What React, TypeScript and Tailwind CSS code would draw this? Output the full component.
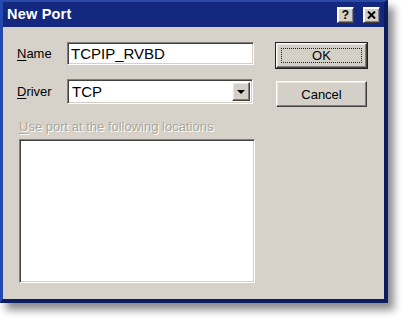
import React from "react";

const raised =
  "bg-[#d4d0c8] border border-t-white border-l-white border-r-[#404040] border-b-[#404040] shadow-[inset_-1px_-1px_0_#808080,inset_1px_1px_0_#e8e6e0]";
const sunken =
  "bg-white border border-t-[#808080] border-l-[#808080] border-r-white border-b-white shadow-[inset_1px_1px_0_#404040,inset_-1px_-1px_0_#d4d0c8]";

export default function App() {
  return (
    <div
      className="w-[404px] h-[320px] bg-white overflow-hidden"
      style={{ fontFamily: '"Liberation Sans", Arial, sans-serif' }}
    >
      <div className="w-[388px] h-[303px] flex flex-col border-t-2 border-t-[#2a4aa8] border-l-[3px] border-l-[#2449b0] border-r-4 border-r-[#0b1d5e] border-b-4 border-b-[#0b1d5e] bg-[#14297f] shadow-[6px_7px_8px_rgba(0,0,0,0.45)]">
        {/* Title bar */}
        <div className="h-[25px] flex items-center pl-[4px] pr-[4px] bg-[#13287e]">
          <span className="text-white font-bold text-[14.5px] leading-none tracking-[0.2px]">New Port</span>
          <div className="ml-auto flex items-center gap-[9px] mt-[1px]">
            <div className={`${raised} w-[17px] h-[16px] flex items-center justify-center border-[#222] shadow-[inset_1px_1px_0_#fff,inset_-1px_-1px_0_#808080]`}>
              <span className="font-bold text-[12px] leading-none text-black">?</span>
            </div>
            <div className={`${raised} w-[17px] h-[16px] flex items-center justify-center border-[#222] shadow-[inset_1px_1px_0_#fff,inset_-1px_-1px_0_#808080]`}>
              <svg width="9" height="8" viewBox="0 0 9 8">
                <path d="M1 0.5 L8 7.5 M8 0.5 L1 7.5" stroke="#000" strokeWidth="2" />
              </svg>
            </div>
          </div>
        </div>
        {/* Body */}
        <div className="flex-1 bg-[#d6d2ca] flex pt-[15px] pl-[14px] pr-[16px] pb-[16px] gap-[20px]">
          <div className="w-[238px] flex flex-col">
            <div className="flex items-center h-[23px]">
              <span className="w-[50px] text-[13px] text-black">
                <span className="underline underline-offset-2">N</span>ame
              </span>
              <div className={`${sunken} w-[187px] h-[23px] flex items-center pl-[3px]`}>
                <span className="text-[15px] text-black leading-none">TCPIP_RVBD</span>
              </div>
            </div>
            <div className="flex items-center h-[25px] mt-[14px]">
              <span className="w-[50px] text-[13px] text-black">
                <span className="underline underline-offset-2">D</span>river
              </span>
              <div className={`${sunken} w-[186px] h-[25px] flex items-center p-[2px]`}>
                <span className="flex-1 pl-[2px] text-[15px] text-black leading-none">TCP</span>
                <div className={`${raised} w-[18px] h-full flex items-center justify-center`}>
                  <svg width="8" height="4" viewBox="0 0 8 4">
                    <path d="M0 0 H8 L4 4 Z" fill="#000" />
                  </svg>
                </div>
              </div>
            </div>
            <div className="mt-[15px] h-[16px] ml-[2px] text-[13px] leading-[16px] text-[#aaa79c] [text-shadow:1px_1px_0_#fff]">
              <span className="underline underline-offset-2">U</span>se port at the following locations
            </div>
            <div className={`${sunken} mt-[4px] ml-[2px] w-[236px] h-[144px]`} />
          </div>
          <div className="flex flex-col">
            <div className="w-[93px] h-[27px] border border-[#202020] p-0">
              <div className={`${raised} w-full h-full flex items-center justify-center`}>
                <div className="w-[calc(100%-8px)] h-[calc(100%-8px)] border border-dotted border-[#202020] flex items-center justify-center">
                  <span className="text-[13px] text-black leading-none">OK</span>
                </div>
              </div>
            </div>
            <div className={`${raised} mt-[12px] ml-[1px] w-[91px] h-[26px] flex items-center justify-center`}>
              <span className="text-[13px] text-black leading-none">Cancel</span>
            </div>
          </div>
        </div>
      </div>
    </div>
  );
}
